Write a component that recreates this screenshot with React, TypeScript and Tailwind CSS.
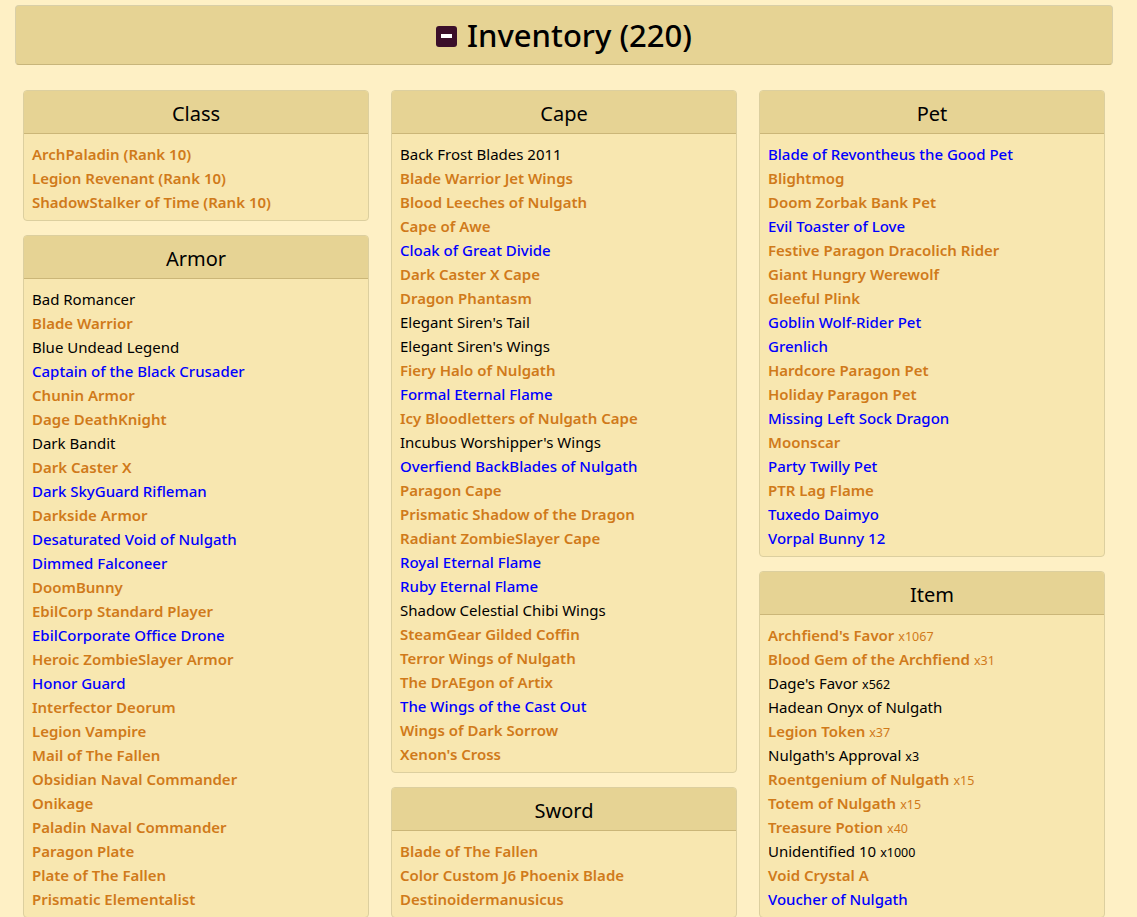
import React from "react";

type It = [string, "o" | "b" | "k", string?];

const O = "o", B = "b", K = "k";

const col1: { title: string; items: It[] }[] = [
  { title: "Class", items: [["ArchPaladin (Rank 10)", O], ["Legion Revenant (Rank 10)", O], ["ShadowStalker of Time (Rank 10)", O]] },
  {
    title: "Armor",
    items: [
      ["Bad Romancer", K], ["Blade Warrior", O], ["Blue Undead Legend", K], ["Captain of the Black Crusader", B],
      ["Chunin Armor", O], ["Dage DeathKnight", O], ["Dark Bandit", K], ["Dark Caster X", O],
      ["Dark SkyGuard Rifleman", B], ["Darkside Armor", O], ["Desaturated Void of Nulgath", B], ["Dimmed Falconeer", B],
      ["DoomBunny", O], ["EbilCorp Standard Player", O], ["EbilCorporate Office Drone", B], ["Heroic ZombieSlayer Armor", O],
      ["Honor Guard", B], ["Interfector Deorum", O], ["Legion Vampire", O], ["Mail of The Fallen", O],
      ["Obsidian Naval Commander", O], ["Onikage", O], ["Paladin Naval Commander", O], ["Paragon Plate", O],
      ["Plate of The Fallen", O], ["Prismatic Elementalist", O],
    ] as It[],
  },
];
const col2: { title: string; items: It[] }[] = [
  {
    title: "Cape",
    items: [
      ["Back Frost Blades 2011", K], ["Blade Warrior Jet Wings", O], ["Blood Leeches of Nulgath", O], ["Cape of Awe", O],
      ["Cloak of Great Divide", B], ["Dark Caster X Cape", O], ["Dragon Phantasm", O], ["Elegant Siren's Tail", K],
      ["Elegant Siren's Wings", K], ["Fiery Halo of Nulgath", O], ["Formal Eternal Flame", B], ["Icy Bloodletters of Nulgath Cape", O],
      ["Incubus Worshipper's Wings", K], ["Overfiend BackBlades of Nulgath", B], ["Paragon Cape", O], ["Prismatic Shadow of the Dragon", O],
      ["Radiant ZombieSlayer Cape", O], ["Royal Eternal Flame", B], ["Ruby Eternal Flame", B], ["Shadow Celestial Chibi Wings", K],
      ["SteamGear Gilded Coffin", O], ["Terror Wings of Nulgath", O], ["The DrAEgon of Artix", O], ["The Wings of the Cast Out", B],
      ["Wings of Dark Sorrow", O], ["Xenon's Cross", O],
    ] as It[],
  },
  { title: "Sword", items: [["Blade of The Fallen", O], ["Color Custom J6 Phoenix Blade", O], ["Destinoidermanusicus", O]] as It[] },
];
const col3: { title: string; items: It[] }[] = [
  {
    title: "Pet",
    items: [
      ["Blade of Revontheus the Good Pet", B], ["Blightmog", O], ["Doom Zorbak Bank Pet", O], ["Evil Toaster of Love", B],
      ["Festive Paragon Dracolich Rider", O], ["Giant Hungry Werewolf", O], ["Gleeful Plink", O], ["Goblin Wolf-Rider Pet", B],
      ["Grenlich", B], ["Hardcore Paragon Pet", O], ["Holiday Paragon Pet", O], ["Missing Left Sock Dragon", B],
      ["Moonscar", O], ["Party Twilly Pet", B], ["PTR Lag Flame", O], ["Tuxedo Daimyo", B], ["Vorpal Bunny 12", B],
    ] as It[],
  },
  {
    title: "Item",
    items: [
      ["Archfiend's Favor", O, "x1067"], ["Blood Gem of the Archfiend", O, "x31"], ["Dage's Favor", K, "x562"],
      ["Hadean Onyx of Nulgath", K], ["Legion Token", O, "x37"], ["Nulgath's Approval", K, "x3"],
      ["Roentgenium of Nulgath", O, "x15"], ["Totem of Nulgath", O, "x15"], ["Treasure Potion", O, "x40"],
      ["Unidentified 10", K, "x1000"], ["Void Crystal A", O], ["Voucher of Nulgath", B],
    ] as It[],
  },
];

function Card({ title, items }: { title: string; items: It[] }) {
  return (
    <div className="rounded border border-[#dccf9f] bg-[#f8e7b0] overflow-hidden">
      <div className="h-[43px] flex items-center justify-center bg-[#e6d394] border-b border-[#cbb678] text-[20px] text-black pt-[3px]">{title}</div>
      <div className="px-2 pt-[8px] pb-[6px]">
        {items.map(([n, c, q], i) => (
          <div key={i} className="h-6 leading-6 text-[15px] whitespace-nowrap">
            <span className={c === "o" ? "text-[#d07a1a] font-semibold" : c === "b" ? "text-[#0000ff] font-medium" : "text-black"}>{n}</span>
            {q && <span className={"text-[12.5px] ml-1 " + (c === "o" ? "text-[#d07a1a]" : "text-black")}>{q}</span>}
          </div>
        ))}
      </div>
    </div>
  );
}

function Col({ cards }: { cards: { title: string; items: It[] }[] }) {
  return <div className="flex flex-col gap-[14px]">{cards.map((c) => <Card key={c.title} {...c} />)}</div>;
}

export default function App() {
  return (
    <div className="h-[917px] overflow-hidden bg-[#fef0c5] pt-[5px]" style={{ fontFamily: '"Noto Sans", sans-serif' }}>
      <div className="mx-[15px] w-[1098px] h-[60px] bg-[#e6d394] border border-[#d9cfa8] border-b-[#c8b57a] rounded-sm flex items-center justify-center gap-[10px]">
        <div className="w-[21px] h-[21px] bg-[#3b0f2a] rounded-[3px] flex items-center justify-center mt-[2px]">
          <div className="w-[11px] h-[4px] bg-white" />
        </div>
        <span className="text-[31px] text-black font-medium">Inventory (220)</span>
      </div>
      <div className="grid grid-cols-[346px_346px_346px] gap-[22px] ml-[23px] mt-[25px]">
        <Col cards={col1} />
        <Col cards={col2} />
        <Col cards={col3} />
      </div>
    </div>
  );
}
